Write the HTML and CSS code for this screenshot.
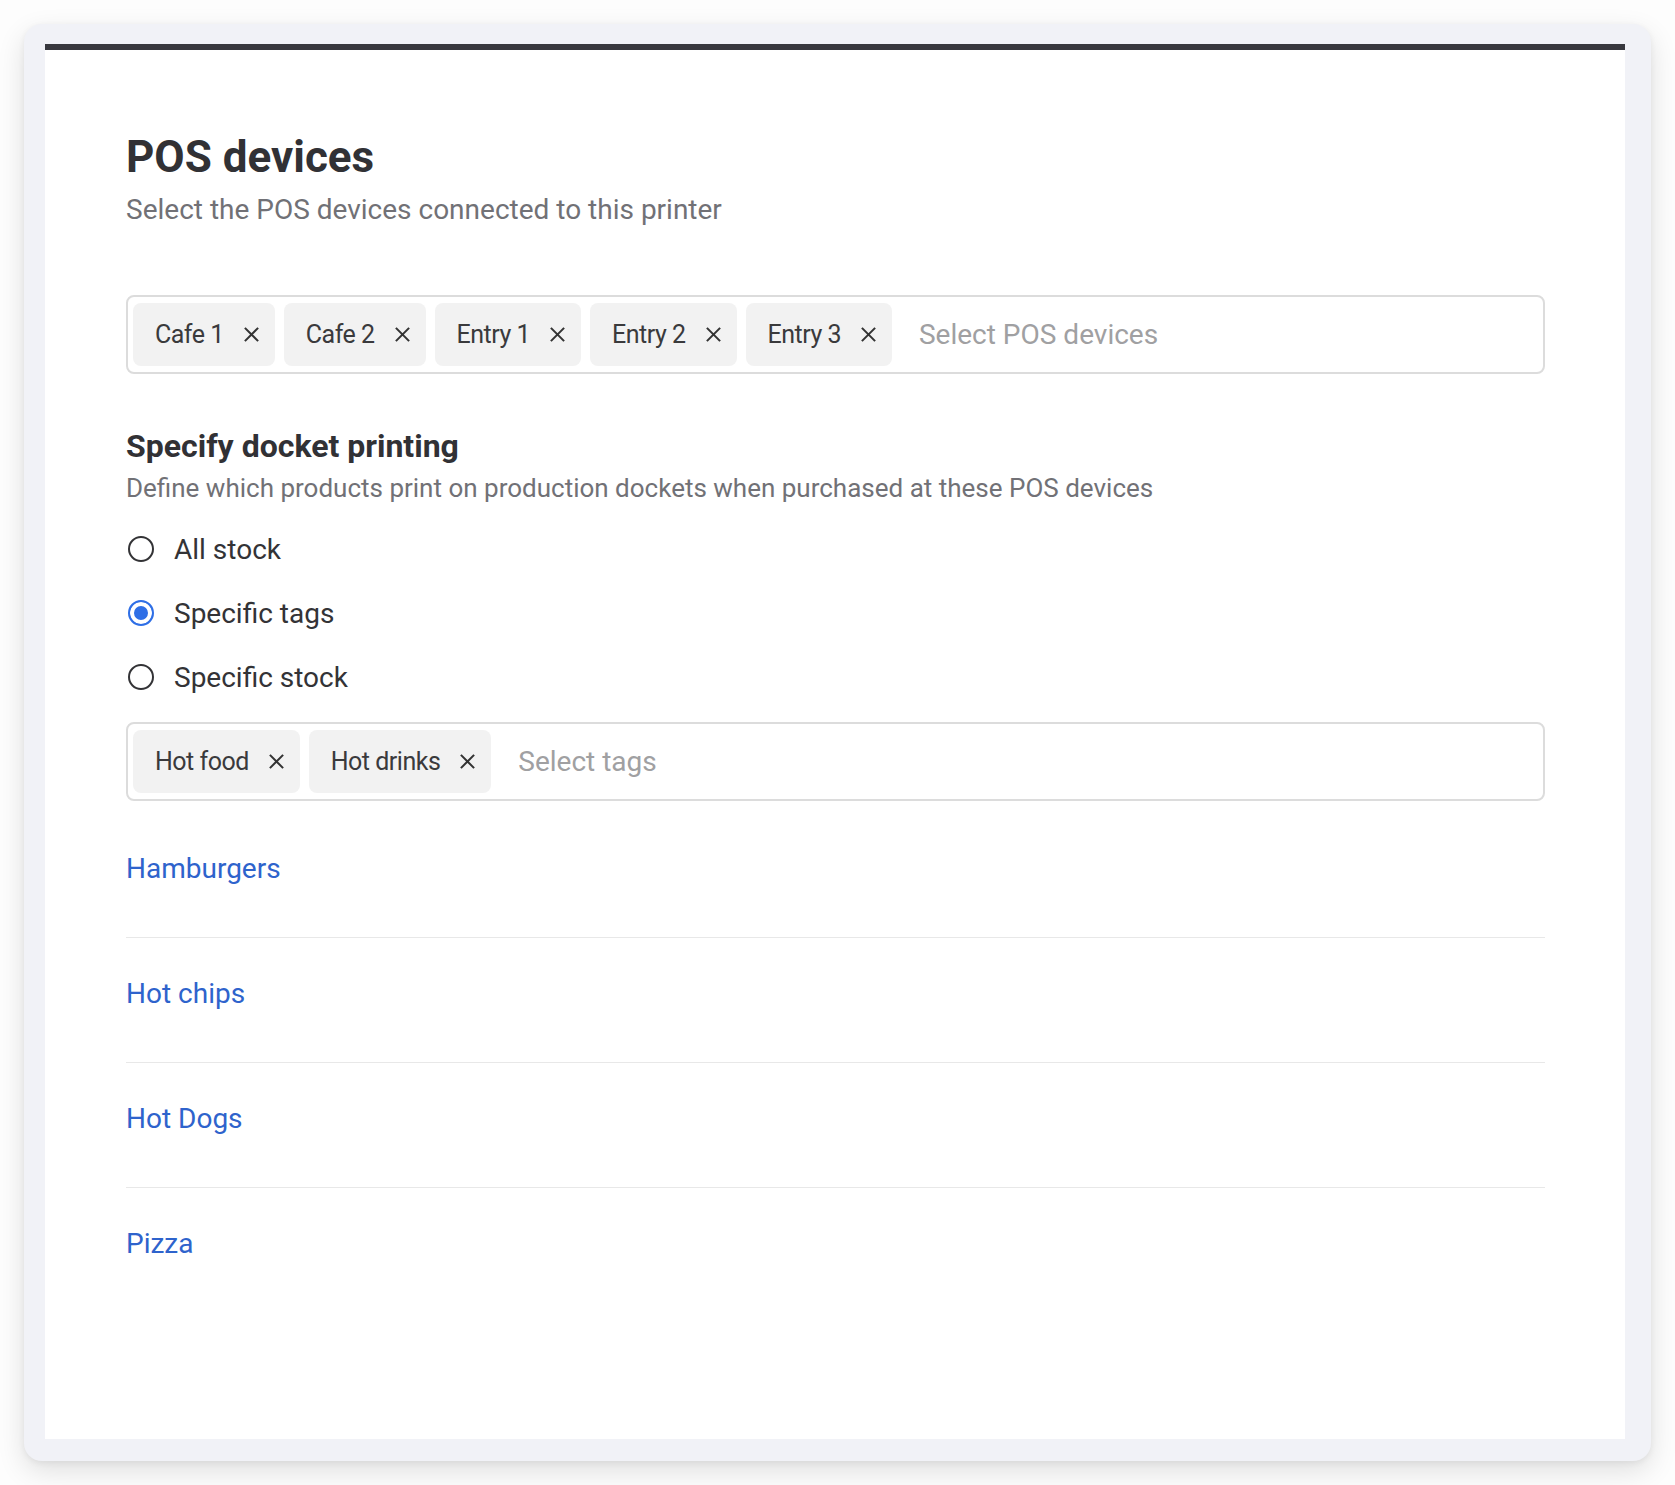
FILE: index.html
```html
<!DOCTYPE html>
<html lang="en">
<head>
  <meta charset="UTF-8" />
  <meta name="viewport" content="width=device-width, initial-scale=1.0"/>
  <title>POS devices</title>
  <link rel="stylesheet" href="styles.css">
</head>
<body>

  <div class="frame">
    <div class="panel">

      <h1 class="title">POS devices</h1>
      <p class="subtitle">Select the POS devices connected to this printer</p>

      <!-- POS device picker -->
      <div class="multi-select">
        <span class="chip">Cafe 1 <svg class="chip-x" viewBox="0 0 18 18"><path d="M2 2L16 16M16 2L2 16"/></svg></span>
        <span class="chip">Cafe 2 <svg class="chip-x" viewBox="0 0 18 18"><path d="M2 2L16 16M16 2L2 16"/></svg></span>
        <span class="chip">Entry 1 <svg class="chip-x" viewBox="0 0 18 18"><path d="M2 2L16 16M16 2L2 16"/></svg></span>
        <span class="chip">Entry 2 <svg class="chip-x" viewBox="0 0 18 18"><path d="M2 2L16 16M16 2L2 16"/></svg></span>
        <span class="chip">Entry 3 <svg class="chip-x" viewBox="0 0 18 18"><path d="M2 2L16 16M16 2L2 16"/></svg></span>
        <span class="placeholder">Select POS devices</span>
      </div>

      <h2 class="section-title">Specify docket printing</h2>
      <p class="section-desc">Define which products print on production dockets when purchased at these POS devices</p>

      <div class="radio-group">
        <label class="radio"><span class="radio-dot"></span>All stock</label>
        <label class="radio"><span class="radio-dot checked"></span>Specific tags</label>
        <label class="radio"><span class="radio-dot"></span>Specific stock</label>
      </div>

      <!-- Tag picker -->
      <div class="multi-select">
        <span class="chip">Hot food <svg class="chip-x" viewBox="0 0 18 18"><path d="M2 2L16 16M16 2L2 16"/></svg></span>
        <span class="chip">Hot drinks <svg class="chip-x" viewBox="0 0 18 18"><path d="M2 2L16 16M16 2L2 16"/></svg></span>
        <span class="placeholder">Select tags</span>
      </div>

      <ul class="tag-list">
        <li><a href="#">Hamburgers</a></li>
        <li><a href="#">Hot chips</a></li>
        <li><a href="#">Hot Dogs</a></li>
        <li><a href="#">Pizza</a></li>
      </ul>

    </div>
  </div>

</body>
</html>
```

FILE: styles.css
```css
body {
  margin: 0;
  padding: 0;
  background: #fdfdfd;
  font-family: Roboto, 'Liberation Sans', sans-serif;
  color: #333336;
}

.frame {
  margin: 24px;
  height: 1437px;
  box-sizing: border-box;
  padding: 20px 26px 22px 21px;
  background: #f1f2f7;
  border-radius: 18px;
  box-shadow: 0 10px 28px rgba(0,0,0,0.12), 0 2px 6px rgba(0,0,0,0.06);
  display: flex;
}

.panel {
  flex: 1;
  background: #fff;
  border-top: 6px solid #38383e;
  padding: 81px 80px 0 81px;
}

.title {
  margin: 0;
  font-size: 44px;
  line-height: 52px;
  font-weight: 700;
  color: #313135;
}

.subtitle {
  margin: 9px 0 0;
  font-size: 28px;
  line-height: 36px;
  color: #717176;
}

/* Multi select */
.multi-select {
  margin-top: 67px;
  height: 79px;
  box-sizing: border-box;
  border: 2px solid #dcdcdc;
  border-radius: 8px;
  padding: 6px 5px;
  display: flex;
  align-items: stretch;
  gap: 9px;
}

.chip {
  display: flex;
  align-items: center;
  gap: 19px;
  padding: 0 15px 0 22px;
  background: #f2f2f2;
  border-radius: 8px;
  font-size: 25px;
  letter-spacing: -0.5px;
  color: #3a3a3c;
}

.chip-x {
  width: 17px;
  height: 17px;
  stroke: #333;
  stroke-width: 2.2;
  fill: none;
}

.placeholder {
  display: flex;
  align-items: center;
  padding-left: 18px;
  font-size: 28px;
  color: #a0a0a2;
}

.section-title {
  margin: 52px 0 0;
  font-size: 32px;
  line-height: 40px;
  font-weight: 700;
  color: #313135;
}

.section-desc {
  margin: 4px 0 0;
  font-size: 26px;
  line-height: 36px;
  color: #717176;
}

/* Radios */
.radio-group {
  margin-top: 11px;
  display: flex;
  flex-direction: column;
}

.radio {
  height: 64px;
  display: flex;
  align-items: center;
  gap: 20px;
  padding-left: 2px;
  font-size: 28px;
  color: #333336;
}

.radio-dot {
  width: 26px;
  height: 26px;
  box-sizing: border-box;
  border: 2.5px solid #333336;
  border-radius: 50%;
}

.radio-dot.checked {
  border-color: #2f6fe6;
  background: #2f6fe6;
  box-shadow: inset 0 0 0 4px #fff;
}

.radio-group + .multi-select {
  margin-top: 13px;
}

/* Tag list */
.tag-list {
  list-style: none;
  margin: 12px 0 0;
  padding: 0;
}

.tag-list li {
  padding: 36px 0 48px;
  border-bottom: 1px solid #e8e8e8;
}

.tag-list li:last-child {
  border-bottom: none;
}

.tag-list a {
  font-size: 28px;
  line-height: 40px;
  color: #2e63cc;
  text-decoration: none;
}
```
